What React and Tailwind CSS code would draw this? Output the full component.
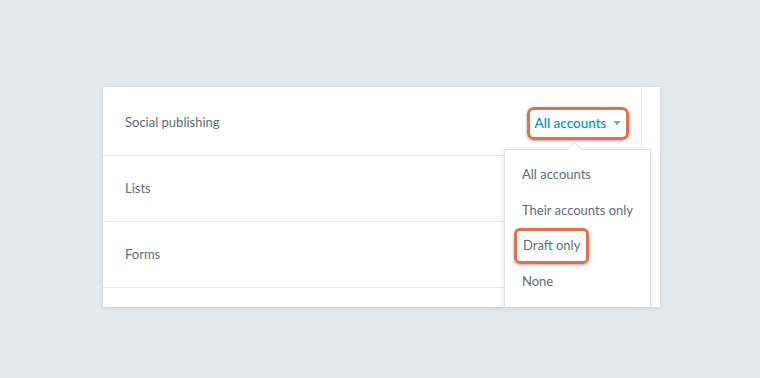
import React from "react";

const rows = ["Social publishing", "Lists", "Forms"];
const options = ["All accounts", "Their accounts only", "Draft only", "None"];

function Caret() {
  return (
    <svg width="8" height="5" viewBox="0 0 8 5" className="ml-[7px] mt-[1px]">
      <path d="M0.5 0h7L4 4.5z" fill="#5fb3c6" />
    </svg>
  );
}

export default function App() {
  return (
    <div
      className="w-[760px] h-[378px] bg-[#e4e9ee] pl-[103px] pt-[87px] text-[13px] text-[#616d79]"
      style={{ fontFamily: "Lato, 'Open Sans', sans-serif" }}
    >
      <div className="relative w-[557px] h-[220px] bg-white shadow-[0_1px_4px_rgba(60,80,100,0.18)] overflow-hidden flex">
        <div className="w-[538px] flex flex-col">
          {rows.map((r, i) => (
            <div
              key={r}
              className={`flex items-center justify-between pl-[22px] border-b border-[#e6eaee] ${
                i === 0 ? "h-[69px] pt-[4px]" : "h-[66px]"
              }`}
            >
              <span>{r}</span>
              {i === 0 && (
                <div className="mr-[12px] h-[33px] w-[102px] rounded-[7px] border-[3px] border-[#df7152] shadow-[0_1px_3px_rgba(0,0,0,0.35)] flex items-center justify-center text-[#0091ae] font-medium text-[13.5px]">
                  All accounts
                  <Caret />
                </div>
              )}
            </div>
          ))}
        </div>
        <div className="flex-1 border-l border-[#eef1f4]" />

        {/* dropdown menu */}
        <div className="absolute left-[401px] top-[62px] w-[147px] h-[170px] bg-white border border-[#dfe4ea] shadow-[0_2px_6px_rgba(60,80,100,0.15)] pt-[7px]">
          <div className="absolute -top-[6px] left-[64px] w-[11px] h-[11px] rotate-45 bg-white border-l border-t border-[#dfe4ea]" />
          <div className="flex flex-col">
            {options.map((o) => (
              <div key={o} className="h-[35.5px] flex items-center pl-[17px]">
                {o === "Draft only" ? (
                  <span className="-ml-[8px] h-[36px] px-[6px] rounded-[6px] border-[3px] border-[#df7152] shadow-[0_1px_3px_rgba(0,0,0,0.35)] flex items-center">
                    {o}
                  </span>
                ) : (
                  <span>{o}</span>
                )}
              </div>
            ))}
          </div>
        </div>
      </div>
    </div>
  );
}
